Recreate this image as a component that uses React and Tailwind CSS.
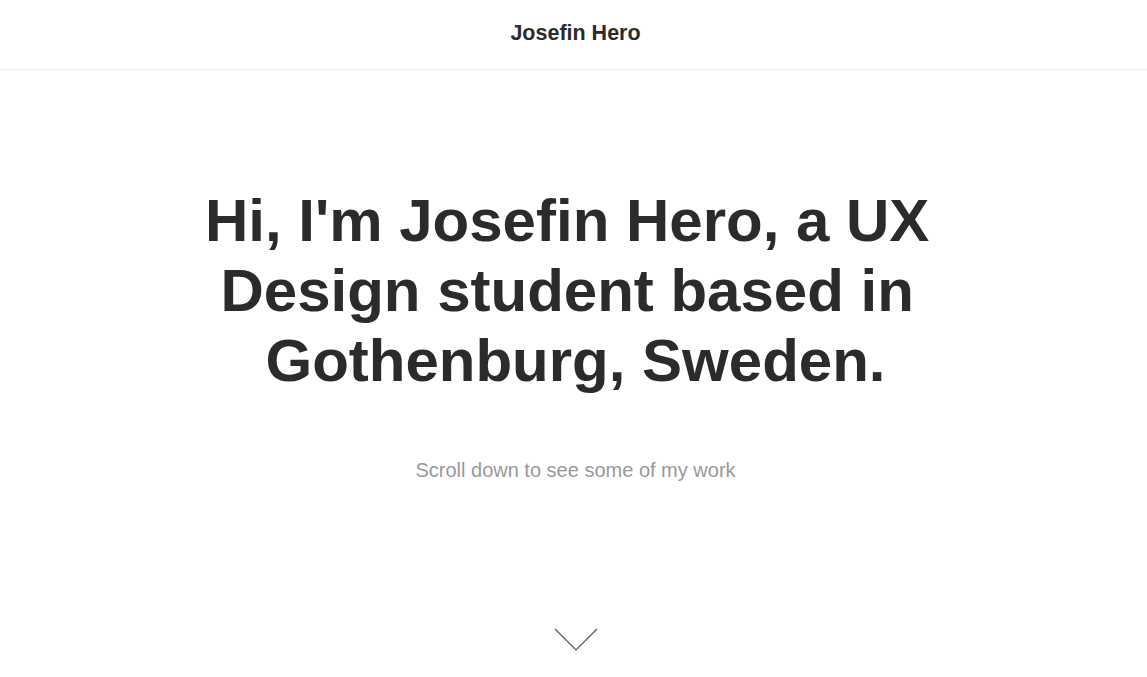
export default function App() {
  return (
    <div className="min-h-screen bg-white text-[#2b2b2b] font-['Liberation_Sans',Arial,sans-serif]">
      <header className="h-[70px] border-b border-[#ececec] flex items-center justify-center pl-1">
        <h1 className="text-[21.5px] font-bold text-[#2b2b2b] -mt-[2px]">Josefin Hero</h1>
      </header>

      <main className="flex flex-col items-center pl-1">
        <h2 className="mt-[116px] max-w-[760px] text-center text-[60px] leading-[70px] font-bold whitespace-break-spaces">
          Hi, I'm Josefin Hero, a UX Design student based in Gothenburg, Sweden.
        </h2>
        <p className="mt-[59px] text-[20px] leading-[30px] text-[#999999]">Scroll down to see some of my work</p>
        <svg className="mt-[143px]" width="44" height="24" viewBox="0 0 44 24" fill="none">
          <path d="M1 1 L22 22 L43 1" stroke="#555" strokeWidth="1.2" />
        </svg>
      </main>
    </div>
  );
}
